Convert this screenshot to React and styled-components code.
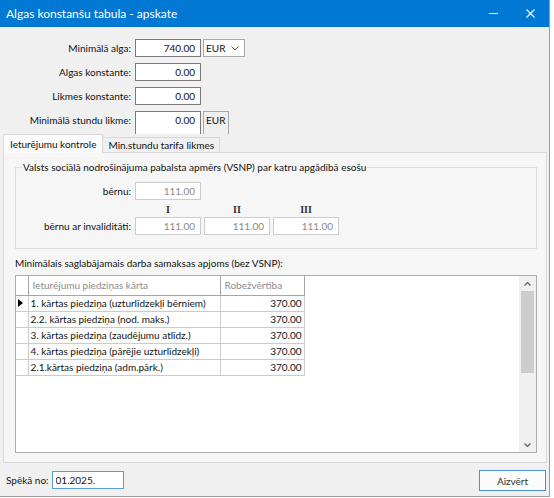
import styled, { createGlobalStyle } from "styled-components";

const GlobalStyle = createGlobalStyle`
  html, body {
    margin: 0;
    padding: 0;
    background: #ffffff;
  }
  body {
    font-family: "Lato", "Liberation Sans", sans-serif;
    font-size: 10px;
    color: #111111;
  }
  * {
    box-sizing: border-box;
  }
`;

const deductions = [
  { name: "1. kārtas piedziņa (uzturlīdzekļi bērniem)", limit: "370.00", current: true },
  { name: "2.2. kārtas piedziņa (nod. maks.)", limit: "370.00" },
  { name: "3. kārtas piedziņa (zaudējumu atlīdz.)", limit: "370.00" },
  { name: "4. kārtas piedziņa (pārējie uzturlīdzekļi)", limit: "370.00" },
  { name: "2.1.kārtas piedziņa (adm.pārk.)", limit: "370.00" },
];

function App() {
  return (
    <>
      <GlobalStyle />
      <Window>
        <TitleBar>
          <TitleText>Algas konstanšu tabula - apskate</TitleText>
          <WinButton>
            <svg width="9" height="9" viewBox="0 0 9 9">
              <path d="M0 4.5h9" stroke="#ffffff" strokeWidth="1" />
            </svg>
          </WinButton>
          <WinButton>
            <svg width="9" height="9" viewBox="0 0 9 9">
              <path d="M0.5 0.5l8 8M8.5 0.5l-8 8" stroke="#ffffff" strokeWidth="1.1" />
            </svg>
          </WinButton>
        </TitleBar>

        <TopForm>
          <FormRow>
            <FieldLabel>Minimālā alga:</FieldLabel>
            <NumberField readOnly value="740.00" />
            <CurrencySelect>
              EUR
              <svg width="8" height="5" viewBox="0 0 8 5">
                <path d="M0.5 0.5l3.5 3.5 3.5-3.5" fill="none" stroke="#555555" strokeWidth="1" />
              </svg>
            </CurrencySelect>
          </FormRow>
          <FormRow>
            <FieldLabel>Algas konstante:</FieldLabel>
            <NumberField readOnly value="0.00" />
          </FormRow>
          <FormRow>
            <FieldLabel>Likmes konstante:</FieldLabel>
            <NumberField readOnly value="0.00" />
          </FormRow>
          <FormRow $tall>
            <FieldLabel>Minimālā stundu likme:</FieldLabel>
            <NumberField readOnly value="0.00" $tall />
            <CurrencyTag>EUR</CurrencyTag>
          </FormRow>
        </TopForm>

        <TabStrip>
          <Tab $active>Ieturējumu kontrole</Tab>
          <Tab>Min.stundu tarifa likmes</Tab>
        </TabStrip>

        <TabPanel>
          <GroupBox>
            <GroupTitle>Valsts sociālā nodrošinājuma pabalsta apmērs (VSNP) par katru apgādībā esošu</GroupTitle>
            <GroupRow>
              <FieldLabel $width={115}>bērnu:</FieldLabel>
              <NumberField readOnly value="111.00" $disabled />
            </GroupRow>
            <NumeralRow>
              <Numeral>I</Numeral>
              <Numeral>II</Numeral>
              <Numeral>III</Numeral>
            </NumeralRow>
            <GroupRow>
              <FieldLabel $width={115}>bērnu ar invaliditāti:</FieldLabel>
              <NumberField readOnly value="111.00" $disabled />
              <NumberField readOnly value="111.00" $disabled />
              <NumberField readOnly value="111.00" $disabled />
            </GroupRow>
          </GroupBox>

          <SectionCaption>Minimālais saglabājamais darba samaksas apjoms (bez VSNP):</SectionCaption>

          <Grid>
            <GridBody>
              <GridTable>
                <colgroup>
                  <col style={{ width: 12 }} />
                  <col style={{ width: 192 }} />
                  <col style={{ width: 84 }} />
                </colgroup>
                <thead>
                  <tr>
                    <HeaderCell />
                    <HeaderCell>Ieturējumu piedziņas kārta</HeaderCell>
                    <HeaderCell>Robežvērtība</HeaderCell>
                  </tr>
                </thead>
                <tbody>
                  {deductions.map((row) => (
                    <tr key={row.name}>
                      <IndicatorCell>
                        {row.current && (
                          <svg width="5" height="8" viewBox="0 0 5 8">
                            <path d="M0 0l5 4-5 4z" fill="#000000" />
                          </svg>
                        )}
                      </IndicatorCell>
                      <Cell>{row.name}</Cell>
                      <Cell $number>{row.limit}</Cell>
                    </tr>
                  ))}
                </tbody>
              </GridTable>
            </GridBody>
            <ScrollBar>
              <ScrollArrow>
                <svg width="7" height="4" viewBox="0 0 7 4">
                  <path d="M0.5 3.5l3-3 3 3" fill="none" stroke="#606060" strokeWidth="1.2" />
                </svg>
              </ScrollArrow>
              <ScrollThumb />
              <ScrollTrack />
              <ScrollArrow>
                <svg width="7" height="4" viewBox="0 0 7 4">
                  <path d="M0.5 0.5l3 3 3-3" fill="none" stroke="#606060" strokeWidth="1.2" />
                </svg>
              </ScrollArrow>
            </ScrollBar>
          </Grid>
        </TabPanel>

        <Footer>
          <FooterField>
            <span>Spēkā no:</span>
            <DateField readOnly value="01.2025." />
          </FooterField>
          <CloseButton>Aizvērt</CloseButton>
        </Footer>
      </Window>
    </>
  );
}

export default App;

const Window = styled.div`
  width: 550px;
  height: 497px;
  background: #f0f0f0;
  border-right: 1px solid #9c9c9c;
  border-bottom: 1px solid #9c9c9c;
  display: flex;
  flex-direction: column;
`;

const TitleBar = styled.div`
  height: 27px;
  flex: none;
  background: #0078d4;
  display: flex;
  align-items: center;
  padding-left: 6px;
  color: #ffffff;
`;

const TitleText = styled.div`
  flex: 1;
  font-size: 12px;
`;

const WinButton = styled.div`
  width: 37px;
  height: 27px;
  display: flex;
  align-items: center;
  justify-content: center;
`;

const TopForm = styled.div`
  display: flex;
  flex-direction: column;
  gap: 6px;
  padding-top: 12px;
`;

const FormRow = styled.div`
  display: flex;
  align-items: flex-start;
  height: ${(p) => (p.$tall ? 23 : 18)}px;
`;

const FieldLabel = styled.div`
  width: ${(p) => p.$width || 131}px;
  flex: none;
  text-align: right;
  line-height: 18px;
  margin-right: 4px;
`;

const NumberField = styled.input`
  width: 66px;
  height: ${(p) => (p.$tall ? 23 : 18)}px;
  flex: none;
  margin: 0 3px 0 0;
  padding: ${(p) => (p.$tall ? "0 5px 7px 2px" : "0 5px 0 2px")};
  border: 1px solid ${(p) => (p.$disabled ? "#cccccc" : "#7a7a7a")};
  border-bottom: ${(p) => (p.$tall ? "none" : undefined)};
  background: #ffffff;
  font-family: inherit;
  font-size: 10px;
  color: ${(p) => (p.$disabled ? "#8a8a8a" : "#111111")};
  text-align: right;
  line-height: 16px;
  outline: none;
`;

const CurrencySelect = styled.div`
  width: 42px;
  height: 18px;
  border: 1px solid #a8a8a8;
  background: #ffffff;
  display: flex;
  align-items: center;
  justify-content: space-between;
  padding: 0 5px 0 2px;
  margin-left: -1px;
`;

const CurrencyTag = styled.div`
  width: 26px;
  height: 23px;
  border: 1px solid #a8a8a8;
  border-bottom: none;
  padding: 2px 0 0 2px;
  margin-left: -1px;
`;

const TabStrip = styled.div`
  height: 18px;
  flex: none;
  display: flex;
  align-items: flex-end;
  padding-left: 3px;
`;

const Tab = styled.div`
  position: relative;
  z-index: ${(p) => (p.$active ? 1 : 0)};
  height: ${(p) => (p.$active ? 19 : 15)}px;
  margin-bottom: ${(p) => (p.$active ? -1 : 0)}px;
  padding: ${(p) => (p.$active ? "2px 6px 0" : "0 5px")};
  border: 1px solid #d9d9d9;
  border-bottom: none;
  border-left: ${(p) => (p.$active ? "1px solid #d9d9d9" : "none")};
  background: ${(p) => (p.$active ? "#fbfbfb" : "#f0f0f0")};
  line-height: 14px;
  white-space: nowrap;
`;

const TabPanel = styled.div`
  flex: 1;
  margin: 0 2px 0 3px;
  border: 1px solid #d9d9d9;
  background: #f6f6f6;
  display: flex;
  flex-direction: column;
  padding: 8px 9px 9px 11px;
  min-height: 0;
`;

const GroupBox = styled.fieldset`
  margin: 0;
  padding: 0 0 13px;
  border: 1px solid #dcdcdc;
  min-width: 0;
`;

const GroupTitle = styled.legend`
  margin-left: 6px;
  padding: 0 1px;
  line-height: 12px;
`;

const GroupRow = styled.div`
  display: flex;
  align-items: flex-start;
  height: 18px;
  &:first-of-type {
    margin-top: 9px;
  }
`;

const NumeralRow = styled.div`
  display: flex;
  height: 17px;
  padding-left: 119px;
`;

const Numeral = styled.div`
  width: 66px;
  margin-right: 3px;
  text-align: center;
  font-family: "Liberation Serif", serif;
  font-weight: bold;
  font-size: 10px;
  line-height: 20px;
  color: #333333;
`;

const SectionCaption = styled.div`
  margin-top: 8px;
  line-height: 12px;
`;

const Grid = styled.div`
  flex: 1;
  margin-top: 6px;
  border: 1px solid #ababab;
  background: #ffffff;
  display: flex;
  min-height: 0;
`;

const GridBody = styled.div`
  flex: 1;
`;

const GridTable = styled.table`
  border-collapse: collapse;
  table-layout: fixed;
  width: 288px;
`;

const HeaderCell = styled.th`
  height: 19px;
  padding: 0 0 0 4px;
  border-right: 1px solid #a5a5a5;
  border-bottom: 1px solid #a5a5a5;
  text-align: left;
  font-weight: normal;
  color: #8b8b8b;
  white-space: nowrap;
  overflow: hidden;
`;

const Cell = styled.td`
  position: relative;
  height: 16px;
  padding: ${(p) => (p.$number ? "0 2px 0 0" : "0 0 0 2px")};
  border-right: 1px solid #cbcbcb;
  border-bottom: 1px solid #cbcbcb;
  text-align: ${(p) => (p.$number ? "right" : "left")};
  white-space: nowrap;
  overflow: hidden;
  line-height: 14px;
  &::after {
    content: "";
    display: ${(p) => (p.$number ? "block" : "none")};
    position: absolute;
    right: -1px;
    top: 5px;
    width: 1px;
    height: 5px;
    background: #4a8ad8;
  }
`;

const IndicatorCell = styled.td`
  height: 16px;
  padding: 0 0 0 2px;
  border-right: 1px solid #cbcbcb;
  border-bottom: 1px solid #cbcbcb;
  line-height: 0;
`;

const ScrollBar = styled.div`
  width: 17px;
  flex: none;
  background: #f0f0f0;
  display: flex;
  flex-direction: column;
`;

const ScrollArrow = styled.div`
  height: 15px;
  display: flex;
  align-items: center;
  justify-content: center;
`;

const ScrollThumb = styled.div`
  height: 82px;
  margin: 0 2px;
  background: #cdcdcd;
`;

const ScrollTrack = styled.div`
  flex: 1;
`;

const Footer = styled.div`
  height: 33px;
  flex: none;
  display: flex;
  align-items: center;
  justify-content: space-between;
  padding: 0 3px 0 6px;
`;

const FooterField = styled.div`
  display: flex;
  align-items: center;
  gap: 3px;
`;

const DateField = styled.input`
  width: 72px;
  height: 18px;
  margin: 0;
  padding: 0 3px;
  border: 1px solid #5a9ad8;
  background: #ffffff;
  font-family: inherit;
  font-size: 10px;
  color: #111111;
  outline: none;
`;

const CloseButton = styled.button`
  width: 67px;
  height: 21px;
  margin-top: 2px;
  padding: 0;
  border: 1px solid #4a90dc;
  background: #fbfbfb;
  font-family: inherit;
  font-size: 10px;
  color: #333333;
`;
